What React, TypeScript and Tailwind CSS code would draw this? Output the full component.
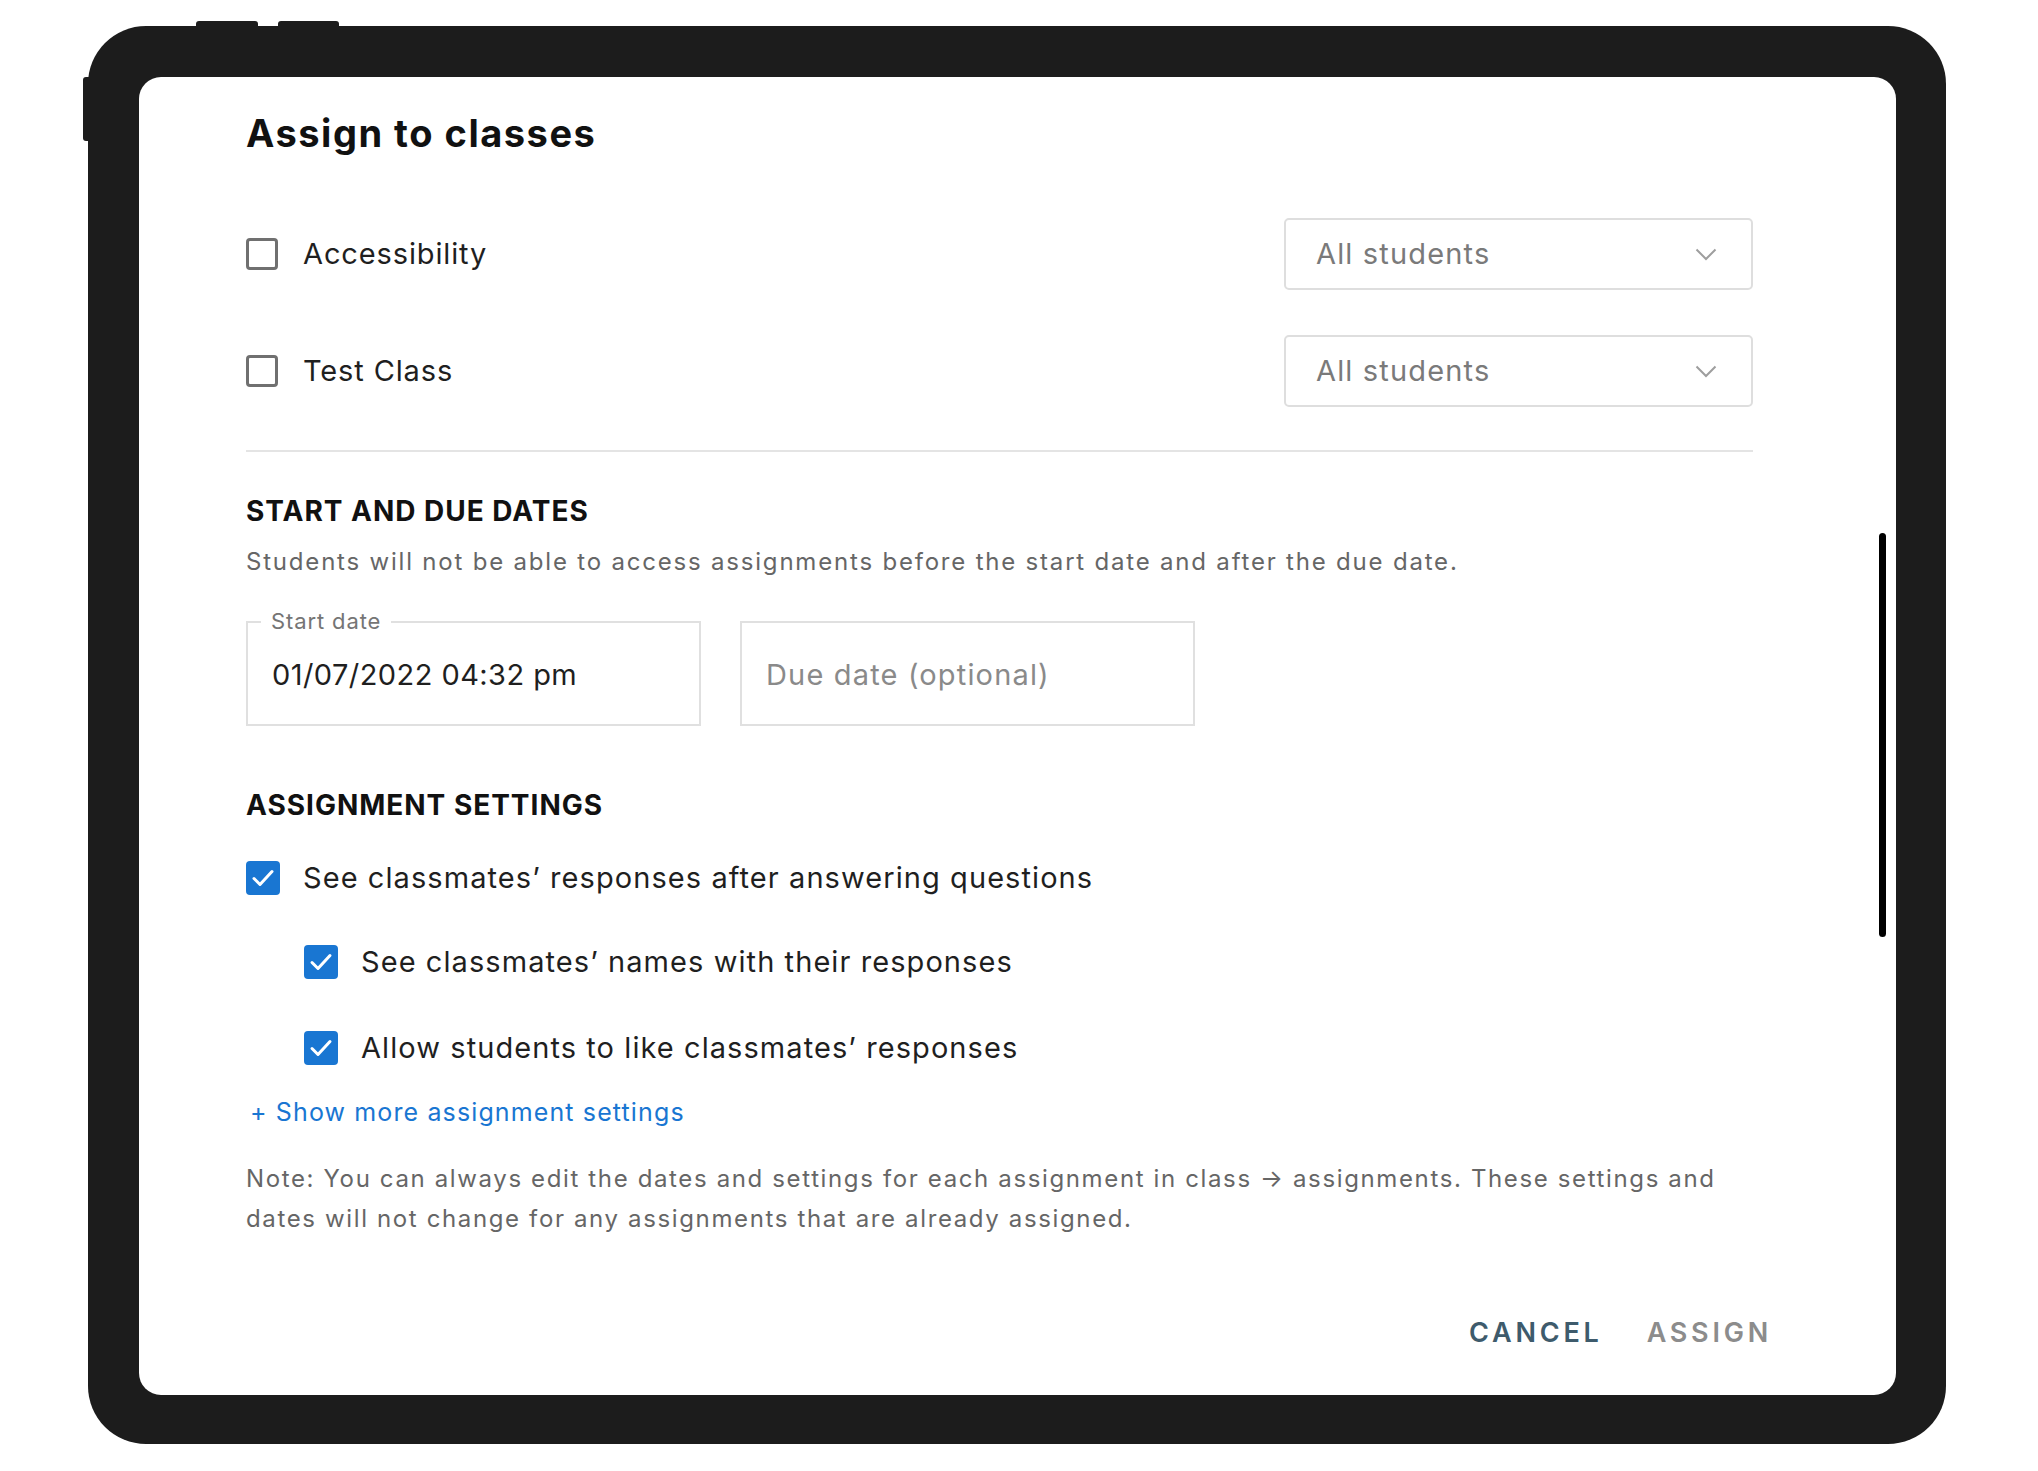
import React from "react";

const font = { fontFamily: "Inter, 'Noto Sans', sans-serif" };

function Chevron() {
  return (
    <svg width="22" height="13" viewBox="0 0 22 13" fill="none">
      <path d="M1.5 1.5 L11 11 L20.5 1.5" stroke="#9e9e9e" strokeWidth="2" />
    </svg>
  );
}

function EmptyBox() {
  return <div className="w-[32px] h-[32px] shrink-0 rounded-[4px] border-[3px] border-[#707070] bg-white" />;
}

function CheckedBox() {
  return (
    <div className="w-[34px] h-[34px] shrink-0 rounded-[4px] bg-[#1976d2] flex items-center justify-center">
      <svg width="24" height="20" viewBox="0 0 24 20" fill="none">
        <path d="M3 10.5 L9 16.5 L21 3.5" stroke="white" strokeWidth="3" strokeLinecap="round" strokeLinejoin="round" />
      </svg>
    </div>
  );
}

function ClassRow({ name, className }: { name: string; className?: string }) {
  return (
    <div className={"flex items-center justify-between h-[72px] " + (className ?? "")}>
      <div className="flex items-center gap-[25px]">
        <EmptyBox />
        <span className="text-[29px] text-[#1f1f1f] tracking-[0.03em]">{name}</span>
      </div>
      <div className="w-[469px] h-[72px] rounded-[5px] border-2 border-[#dedede] flex items-center justify-between pl-[30px] pr-[34px]">
        <span className="text-[29px] text-[#7a7a7a] tracking-[0.04em]">All students</span>
        <Chevron />
      </div>
    </div>
  );
}

function SettingRow({ label, indent, className }: { label: string; indent?: boolean; className?: string }) {
  return (
    <div className={"flex items-center gap-[23px] h-[36px] " + (indent ? "pl-[58px] " : "") + (className ?? "")}>
      <CheckedBox />
      <span className="text-[29px] text-[#1f1f1f] tracking-[0.037em]">{label}</span>
    </div>
  );
}

export default function App() {
  return (
    <div className="w-[2038px] h-[1471px] bg-white overflow-hidden" style={font}>
      <div className="relative ml-[88px] mt-[26px] w-[1858px] h-[1418px] rounded-[58px] bg-[#1c1c1c] pt-[51px] pl-[51px]">
        <div className="absolute left-[108px] top-[-5px] w-[62px] h-[7px] rounded-t-[3px] bg-[#1c1c1c]" />
        <div className="absolute left-[190px] top-[-5px] w-[61px] h-[7px] rounded-t-[3px] bg-[#1c1c1c]" />
        <div className="absolute left-[-5px] top-[51px] w-[7px] h-[64px] rounded-l-[3px] bg-[#1c1c1c]" />
        <div className="relative w-[1757px] h-[1318px] bg-white rounded-[22px] pl-[107px] pr-[143px] pt-[34px]">
          <div className="absolute left-[1740px] top-[456px] w-[7px] h-[404px] rounded-full bg-black" />
          <h1 className="h-[44px] leading-[44px] text-[38px] font-bold text-[#111] tracking-[0.04em]">Assign to classes</h1>

          <ClassRow name="Accessibility" className="mt-[63px]" />
          <ClassRow name="Test Class" className="mt-[45px]" />

          <div className="mt-[43px] h-[2px] bg-[#e4e4e4]" />

          <h2 className="mt-[43px] h-[32px] leading-[32px] text-[28px] font-bold text-[#111] tracking-[0.035em]">START AND DUE DATES</h2>
          <p className="mt-[19px] h-[32px] leading-[32px] text-[24px] text-[#666] tracking-[0.075em]">
            Students will not be able to access assignments before the start date and after the due date.
          </p>

          <div className="mt-[43px] flex gap-[39px]">
            <div className="relative w-[455px] h-[105px] border-2 border-[#e0e0e0] flex items-center pl-[24px] pt-[2px]">
              <span className="absolute left-[13px] top-[-14px] bg-white px-[10px] text-[22px] leading-[24px] text-[#757575] tracking-[0.04em]">Start date</span>
              <span className="text-[29px] text-[#1f1f1f] tracking-[0.015em]">01/07/2022 04:32 pm</span>
            </div>
            <div className="w-[455px] h-[105px] border-2 border-[#e0e0e0] flex items-center pl-[24px] pt-[2px]">
              <span className="text-[29px] text-[#8a8a8a] tracking-[0.04em]">Due date (optional)</span>
            </div>
          </div>

          <h2 className="mt-[63px] h-[32px] leading-[32px] text-[28px] font-bold text-[#111] tracking-[0.035em]">ASSIGNMENT SETTINGS</h2>

          <SettingRow label="See classmates’ responses after answering questions" className="mt-[39px]" />
          <SettingRow label="See classmates’ names with their responses" indent className="mt-[48px]" />
          <SettingRow label="Allow students to like classmates’ responses" indent className="mt-[50px]" />

          <div className="mt-[30px] h-[32px] leading-[32px] pl-[4px] text-[25px] text-[#1976d2] tracking-[0.045em]">+ Show more assignment settings</div>

          <p className="mt-[31px] leading-[40px] text-[24px] text-[#666] tracking-[0.068em]">
            Note: You can always edit the dates and settings for each assignment in class → assignments. These settings and dates will not change for any assignments that are already assigned.
          </p>

          <div className="mt-[78px] mr-[-19px] flex justify-end gap-[44px] h-[32px] leading-[32px]">
            <span className="text-[27px] font-semibold tracking-[0.14em] text-[#3e5b6c]">CANCEL</span>
            <span className="text-[27px] font-semibold tracking-[0.14em] text-[#8c8c8c]">ASSIGN</span>
          </div>
        </div>
      </div>
    </div>
  );
}
